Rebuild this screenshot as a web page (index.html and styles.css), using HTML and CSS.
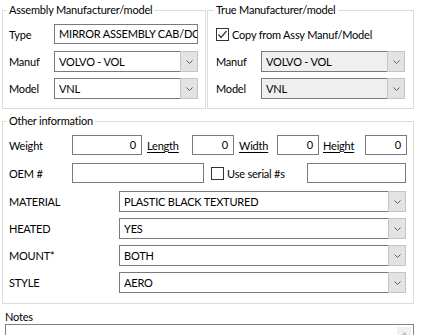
FILE: index.html
```html
<!DOCTYPE html>
<html lang="en">
  <head>
    <meta charset="UTF-8" />
    <title>Part details</title>
    <link rel="stylesheet" href="styles.css">
  </head>
  <body>
    <div class="form">
      <div class="top">
        <fieldset class="group group-assy">
          <legend>Assembly Manufacturer/model</legend>
          <div class="row">
            <span class="lbl">Type</span>
            <div class="box box-type">MIRROR ASSEMBLY CAB/DO</div>
          </div>
          <div class="row row-combo">
            <span class="lbl">Manuf</span>
            <div class="combo combo-sm">
              <span class="combo-text">VOLVO - VOL</span>
              <span class="combo-btn"><svg width="7" height="4" viewBox="0 0 7 4"><polyline points="0.5,0.5 3.5,3.5 6.5,0.5" /></svg></span>
            </div>
          </div>
          <div class="row row-combo">
            <span class="lbl">Model</span>
            <div class="combo combo-sm">
              <span class="combo-text">VNL</span>
              <span class="combo-btn"><svg width="7" height="4" viewBox="0 0 7 4"><polyline points="0.5,0.5 3.5,3.5 6.5,0.5" /></svg></span>
            </div>
          </div>
        </fieldset>

        <fieldset class="group group-true">
          <legend>True Manufacturer/model</legend>
          <div class="row">
            <span class="check checked"><svg width="11" height="11" viewBox="0 0 11 11"><polyline points="1.5,5.5 4,8.5 9.5,2" /></svg></span>
            <span class="check-text">Copy from Assy Manuf/Model</span>
          </div>
          <div class="row row-combo">
            <span class="lbl">Manuf</span>
            <div class="combo combo-sm disabled">
              <span class="combo-text">VOLVO - VOL</span>
              <span class="combo-btn"><svg width="7" height="4" viewBox="0 0 7 4"><polyline points="0.5,0.5 3.5,3.5 6.5,0.5" /></svg></span>
            </div>
          </div>
          <div class="row row-combo">
            <span class="lbl">Model</span>
            <div class="combo combo-sm disabled">
              <span class="combo-text">VNL</span>
              <span class="combo-btn"><svg width="7" height="4" viewBox="0 0 7 4"><polyline points="0.5,0.5 3.5,3.5 6.5,0.5" /></svg></span>
            </div>
          </div>
        </fieldset>
      </div>

      <fieldset class="group group-other">
        <legend>Other information</legend>
        <div class="row">
          <span class="lbl lbl-wide">Weight</span>
          <div class="box box-num box-weight">0</div>
          <a class="dim-link dim-length">Length</a>
          <div class="box box-num box-dim">0</div>
          <a class="dim-link dim-width">Width</a>
          <div class="box box-num box-dim">0</div>
          <a class="dim-link dim-height">Height</a>
          <div class="box box-num box-dim">0</div>
        </div>
        <div class="row row-oem">
          <span class="lbl lbl-wide">OEM #</span>
          <div class="box box-oem"></div>
          <span class="check"></span>
          <span class="check-text serial-text">Use serial #s</span>
          <div class="box box-serial"></div>
        </div>
        <div class="attrs">
          <div class="row row-combo">
            <span class="lbl lbl-attr">MATERIAL</span>
            <div class="combo combo-lg">
              <span class="combo-text">PLASTIC BLACK TEXTURED</span>
              <span class="combo-btn"><svg width="7" height="4" viewBox="0 0 7 4"><polyline points="0.5,0.5 3.5,3.5 6.5,0.5" /></svg></span>
            </div>
          </div>
          <div class="row row-combo">
            <span class="lbl lbl-attr">HEATED</span>
            <div class="combo combo-lg">
              <span class="combo-text">YES</span>
              <span class="combo-btn"><svg width="7" height="4" viewBox="0 0 7 4"><polyline points="0.5,0.5 3.5,3.5 6.5,0.5" /></svg></span>
            </div>
          </div>
          <div class="row row-combo">
            <span class="lbl lbl-attr">MOUNT*</span>
            <div class="combo combo-lg">
              <span class="combo-text">BOTH</span>
              <span class="combo-btn"><svg width="7" height="4" viewBox="0 0 7 4"><polyline points="0.5,0.5 3.5,3.5 6.5,0.5" /></svg></span>
            </div>
          </div>
          <div class="row row-combo">
            <span class="lbl lbl-attr">STYLE</span>
            <div class="combo combo-lg">
              <span class="combo-text">AERO</span>
              <span class="combo-btn"><svg width="7" height="4" viewBox="0 0 7 4"><polyline points="0.5,0.5 3.5,3.5 6.5,0.5" /></svg></span>
            </div>
          </div>
        </div>
      </fieldset>

      <div class="notes-lbl">Notes</div>
      <div class="notes">
        <span class="scroll-up"><svg width="7" height="4" viewBox="0 0 7 4"><polygon points="0,4 3.5,0 7,4" /></svg></span>
      </div>
    </div>
  </body>
</html>
```

FILE: styles.css
```css
html,
body {
  margin: 0;
  height: 335px;
  overflow: hidden;
  background: #fff;
}
body {
  font-family: Lato, "Noto Sans", "Liberation Sans", sans-serif;
  font-size: 11px;
  letter-spacing: -0.2px;
  color: #000;
}
.form {
  padding: 3px 0 0 2px;
  width: 412px;
}
.top {
  display: flex;
  gap: 1px;
}
.group {
  margin: 0;
  border: 1px solid #dcdcdc;
  box-sizing: border-box;
  min-width: 0;
  display: flex;
  flex-direction: column;
}
.group legend {
  padding: 0 2px;
  margin-left: -2px;
  line-height: 14px;
}
.group-assy {
  width: 204px;
  padding: 7px 7px 9px 6px;
  gap: 7px;
}
.group-true {
  width: 207px;
  padding: 7px 8px 9px 8px;
  gap: 7px;
}
.group-assy .row-combo + .row-combo,
.group-true .row-combo + .row-combo {
  margin-top: -1px;
}
.group-other {
  width: 412px;
  margin-top: 5px;
  padding: 7px 7px 10px 6px;
  gap: 8px;
}
.row {
  display: flex;
  align-items: center;
  height: 20px;
}
.row-combo {
  height: 21px;
}
.lbl {
  width: 45px;
  flex: none;
}
.lbl-wide {
  width: 63px;
}
.lbl-attr {
  width: 110px;
}
.box {
  box-sizing: border-box;
  height: 20px;
  border: 1px solid #7a7a7a;
  padding: 0 3px 0 4px;
  line-height: 18px;
  white-space: nowrap;
  overflow: hidden;
  flex: none;
}
.box-type {
  width: 144px;
}
.box-num {
  text-align: right;
  padding-right: 5px;
}
.box-weight {
  width: 70px;
}
.box-dim {
  width: 42px;
}
.dim-link {
  text-decoration: underline;
  text-underline-offset: 2px;
  flex: none;
}
.dim-length {
  width: 45px;
  padding-left: 5px;
}
.dim-width {
  width: 38px;
  padding-left: 5px;
}
.dim-height {
  width: 42px;
  padding-left: 4px;
}
.box-oem {
  width: 132px;
}
.box-serial {
  width: 99px;
}
.check {
  box-sizing: border-box;
  width: 13px;
  height: 13px;
  border: 1px solid #333;
  background: #fff;
  flex: none;
  display: flex;
  align-items: center;
  justify-content: center;
}
.check svg polyline {
  fill: none;
  stroke: #333;
  stroke-width: 1.2;
}
.check-text {
  padding-left: 3px;
  white-space: nowrap;
}
.row-oem .check {
  margin-left: 7px;
}
.serial-text {
  width: 80px;
}
.attrs {
  display: flex;
  flex-direction: column;
  gap: 6px;
}
.combo {
  box-sizing: border-box;
  height: 21px;
  display: flex;
  flex: none;
  border: 1px solid #7a7a7a;
  background: #fff;
}
.combo-sm {
  width: 144px;
}
.combo-lg {
  width: 287px;
}
.combo-text {
  flex: 1;
  padding-left: 4px;
  line-height: 19px;
  white-space: nowrap;
  overflow: hidden;
}
.combo-btn {
  width: 16px;
  margin: -1px -1px -1px 0;
  background: #e3e3e3;
  border: 1px solid #c4c4c4;
  display: flex;
  align-items: center;
  justify-content: center;
}
.combo-btn svg polyline {
  fill: none;
  stroke: #606060;
  stroke-width: 1;
}
.combo.disabled {
  background: #efefef;
}
.notes-lbl {
  margin: 6px 0 0 3px;
  line-height: 14px;
}
.notes {
  box-sizing: border-box;
  margin-left: 3px;
  width: 409px;
  height: 60px;
  border: 1px solid #828282;
  display: flex;
  justify-content: flex-end;
  padding: 2px 2px 0 0;
}
.scroll-up {
  width: 14px;
  height: 14px;
  background: #f0f0f0;
  display: flex;
  align-items: center;
  justify-content: center;
}
.scroll-up svg polygon {
  fill: #c0c0c0;
}
```
